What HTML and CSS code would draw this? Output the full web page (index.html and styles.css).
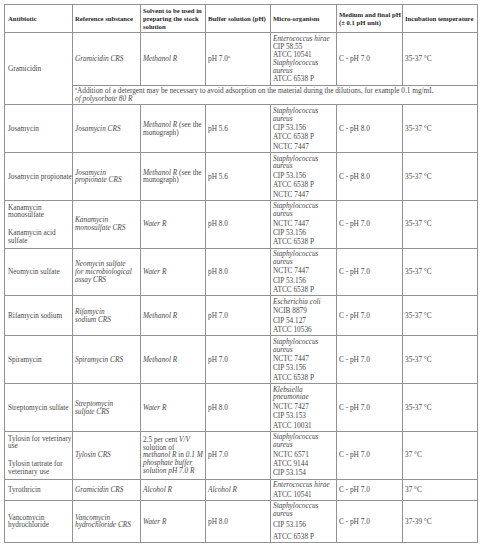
FILE: index.html
```html
<!DOCTYPE html>
<html>
<head>
<meta charset="utf-8">
<link rel="stylesheet" href="styles.css">
</head>
<body>
<table class="abx">
  <colgroup>
    <col class="c1"><col class="c2"><col class="c3"><col class="c4"><col class="c5"><col class="c6"><col class="c7">
  </colgroup>
  <thead>
    <tr>
      <th>Antibiotic</th>
      <th>Reference substance</th>
      <th>Solvent to be used in preparing the stock solution</th>
      <th>Buffer solution (pH)</th>
      <th>Micro-organism</th>
      <th>Medium and final pH (± 0.1 pH unit)</th>
      <th>Incubation temperature</th>
    </tr>
  </thead>
  <tbody>
    <tr>
      <td rowspan="2" class="first">Gramicidin</td>
      <td><i>Gramicidin CRS</i></td>
      <td><i>Methanol R</i></td>
      <td>pH 7.0<sup>a</sup></td>
      <td><div class="list tight"><span><i>Enterococcus hirae</i></span><span>CIP 58.55</span><span>ATCC 10541</span><span><i>Staphylococcus aureus</i></span><span>ATCC 6538 P</span></div></td>
      <td>C - pH 7.0</td>
      <td>35-37 °C</td>
    </tr>
    <tr>
      <td colspan="6" class="note"><sup>a</sup>Addition of a detergent may be necessary to avoid adsorption on the material during the dilutions, for example 0.1 mg/mL<br><i>of polysorbate 80 R</i></td>
    </tr>
    <tr>
      <td class="first">Josamycin</td>
      <td><i>Josamycin CRS</i></td>
      <td><i>Methanol R</i> (see the monograph)</td>
      <td>pH 5.6</td>
      <td><div class="list"><span><i>Staphylococcus aureus</i></span><span>CIP 53.156</span><span>ATCC 6538 P</span><span>NCTC 7447</span></div></td>
      <td>C - pH 8.0</td>
      <td>35-37 °C</td>
    </tr>
    <tr>
      <td class="first">Josamycin propionate</td>
      <td><i>Josamycin propionate CRS</i></td>
      <td><i>Methanol R</i> (see the monograph)</td>
      <td>pH 5.6</td>
      <td><div class="list"><span><i>Staphylococcus aureus</i></span><span>CIP 53.156</span><span>ATCC 6538 P</span><span>NCTC 7447</span></div></td>
      <td>C - pH 8.0</td>
      <td>35-37 °C</td>
    </tr>
    <tr>
      <td class="first"><div class="names"><span>Kanamycin monosulfate</span><span>Kanamycin acid sulfate</span></div></td>
      <td><i>Kanamycin monosulfate CRS</i></td>
      <td><i>Water R</i></td>
      <td>pH 8.0</td>
      <td><div class="list"><span><i>Staphylococcus aureus</i></span><span>NCTC 7447</span><span>CIP 53.156</span><span>ATCC 6538 P</span></div></td>
      <td>C - pH 7.0</td>
      <td>35-37 °C</td>
    </tr>
    <tr>
      <td class="first">Neomycin sulfate</td>
      <td><i>Neomycin sulfate<br>for microbiological<br>assay CRS</i></td>
      <td><i>Water R</i></td>
      <td>pH 8.0</td>
      <td><div class="list"><span><i>Staphylococcus aureus</i></span><span>NCTC 7447</span><span>CIP 53.156</span><span>ATCC 6538 P</span></div></td>
      <td>C - pH 7.0</td>
      <td>35-37 °C</td>
    </tr>
    <tr>
      <td class="first">Rifamycin sodium</td>
      <td><i>Rifamycin<br>sodium CRS</i></td>
      <td><i>Methanol R</i></td>
      <td>pH 7.0</td>
      <td><div class="list"><span><i>Escherichia coli</i></span><span>NCIB 8879</span><span>CIP 54.127</span><span>ATCC 10536</span></div></td>
      <td>C - pH 7.0</td>
      <td>35-37 °C</td>
    </tr>
    <tr>
      <td class="first">Spiramycin</td>
      <td><i>Spiramycin CRS</i></td>
      <td><i>Methanol R</i></td>
      <td>pH 7.0</td>
      <td><div class="list"><span><i>Staphylococcus aureus</i></span><span>NCTC 7447</span><span>CIP 53.156</span><span>ATCC 6538 P</span></div></td>
      <td>C - pH 7.0</td>
      <td>35-37 °C</td>
    </tr>
    <tr>
      <td class="first">Streptomycin sulfate</td>
      <td><i>Streptomycin<br>sulfate CRS</i></td>
      <td><i>Water R</i></td>
      <td>pH 8.0</td>
      <td><div class="list"><span><i>Klebsiella pneumoniae</i></span><span>NCTC 7427</span><span>CIP 53.153</span><span>ATCC 10031</span></div></td>
      <td>C - pH 7.0</td>
      <td>35-37 °C</td>
    </tr>
    <tr>
      <td class="first"><div class="names"><span>Tylosin for veterinary use</span><span>Tylosin tartrate for veterinary use</span></div></td>
      <td><i>Tylosin CRS</i></td>
      <td>2.5 per cent <i>V/V</i><br>solution of<br><i>methanol R</i> in <i>0.1 M</i><br><i>phosphate buffer</i><br><i>solution pH 7.0 R</i></td>
      <td>pH 7.0</td>
      <td><div class="list"><span><i>Staphylococcus aureus</i></span><span>NCTC 6571</span><span>ATCC 9144</span><span>CIP 53.154</span></div></td>
      <td>C - pH 7.0</td>
      <td>37 °C</td>
    </tr>
    <tr>
      <td class="first">Tyrothricin</td>
      <td><i>Gramicidin CRS</i></td>
      <td><i>Alcohol R</i></td>
      <td><i>Alcohol R</i></td>
      <td><div class="list"><span><i>Enterococcus hirae</i></span><span>ATCC 10541</span></div></td>
      <td>C - pH 7.0</td>
      <td>37 °C</td>
    </tr>
    <tr>
      <td class="first">Vancomycin hydrochloride</td>
      <td><i>Vancomycin hydrochloride CRS</i></td>
      <td><i>Water R</i></td>
      <td>pH 8.0</td>
      <td><div class="list loose"><span><i>Staphylococcus aureus</i></span><span>CIP 53.156</span><span>ATCC 6538 P</span></div></td>
      <td>C - pH 7.0</td>
      <td>37-39 °C</td>
    </tr>
  </tbody>
</table>
</body>
</html>
```

FILE: styles.css
```css
html, body {
  margin: 0;
  padding: 0;
  background: #ffffff;
}

body {
  padding: 4px 0 0 4px;
  font-family: "Liberation Serif", "Times New Roman", serif;
  color: #484848;
}

.abx {
  border-collapse: collapse;
  table-layout: fixed;
  width: 473px;
  font-size: 7.3px;
  line-height: 7.8px;
}

.c1 { width: 68px; }
.c2 { width: 68px; }
.c3 { width: 65px; }
.c4 { width: 65px; }
.c5 { width: 66px; }
.c6 { width: 66px; }
.c7 { width: 75px; }

.abx th,
.abx td {
  border: 1px solid #929292;
  padding: 1.5px 1px 1.5px 2px;
  vertical-align: middle;
  text-align: left;
}

.abx td.first {
  padding-left: 3px;
  padding-right: 0;
}

.abx th {
  font-weight: bold;
  font-size: 6.7px;
  line-height: 7.8px;
  color: #262626;
  padding: 2px 0 2px 2px;
}

.abx th:first-child {
  padding-left: 3px;
}

.abx sup {
  font-size: 4.5px;
  line-height: 0;
  vertical-align: 3px;
}

.list span,
.names span {
  display: block;
}

.list span + span {
  margin-top: 1.6px;
}

.list.tight span + span {
  margin-top: 0.4px;
}

.list.loose span + span {
  margin-top: 3.5px;
}

.names span + span {
  margin-top: 10px;
}

.note {
  padding-top: 5px;
  padding-bottom: 5px;
}
```
